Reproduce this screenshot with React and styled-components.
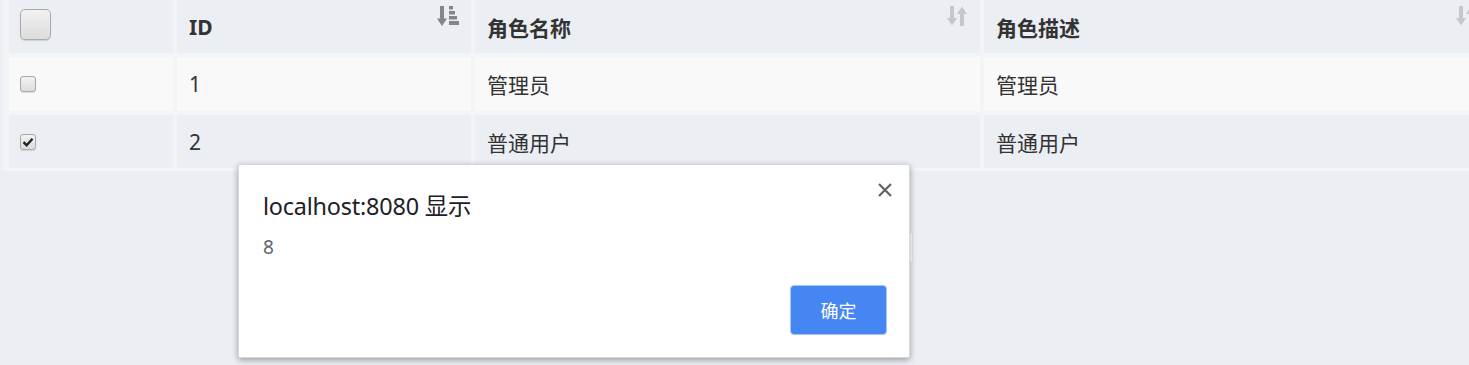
import React from "react";
import styled, { createGlobalStyle } from "styled-components";

const Global = createGlobalStyle`
  html, body { margin: 0; padding: 0; }
  body {
    background: #ebeef3;
    overflow: hidden;
    width: 1469px;
    height: 365px;
    font-family: "Noto Sans", "Noto Sans CJK SC", sans-serif;
    color: #333;
  }
`;

const Page = styled.div`
  position: relative;
  width: 1469px;
  height: 365px;
  overflow: hidden;
`;

const Table = styled.div`
  display: grid;
  grid-template-columns: 164px 294px 505px 505px;
  grid-template-rows: 53px 54px 53px;
  gap: 4px;
  padding: 0 6px 3px 6px;
  margin-left: 3px;
  width: max-content;
  background: #f3f4f7;
`;

const Cell = styled.div`
  position: relative;
  display: flex;
  align-items: center;
  padding: 0 12px;
  background: ${(p) => (p.$striped ? "#f9f9f9" : "#ebeef3")};
  font-size: 21px;
  font-weight: ${(p) => (p.$head ? 700 : 400)};
  color: #333;
  white-space: nowrap;
`;

const CheckCell = styled(Cell)`
  padding: 0 11px;
`;

const SortIcon = styled.span`
  position: absolute;
  top: 5px;
  right: 10px;
  width: 24px;
  height: 22px;
  display: block;
`;

const Box = styled.span`
  display: inline-flex;
  align-items: center;
  justify-content: center;
  box-sizing: border-box;
  width: ${(p) => p.$size}px;
  height: ${(p) => p.$size}px;
  border: 1px solid #a9a9a9;
  border-radius: ${(p) => (p.$size > 20 ? 5 : 3)}px;
  background: linear-gradient(#f2f2f2, #dcdcdc);
  box-shadow: 0 1px 1px rgba(0, 0, 0, 0.12);
  margin-top: ${(p) => (p.$size > 20 ? -5 : 0)}px;
`;

const Dialog = styled.div`
  position: absolute;
  left: 238px;
  top: 164px;
  width: 672px;
  height: 194px;
  box-sizing: border-box;
  background: #fff;
  border: 1px solid #d6d8dc;
  border-radius: 2px;
  box-shadow: 0 2px 6px rgba(0, 0, 0, 0.35);
  padding: 24px 24px 0 24px;
  display: flex;
  flex-direction: column;
`;

const Behind = styled.div`
  position: absolute;
  left: 700px;
  top: 233px;
  width: 212px;
  height: 29px;
  background: #fff;
  border-right: 1px solid #e3e5e8;
`;

const Title = styled.div`
  font-size: 23.4px;
  color: #202124;
  line-height: 34px;
  letter-spacing: -0.2px;
`;

const Message = styled.div`
  margin-top: 11px;
  font-size: 19px;
  color: #5f6368;
  line-height: 26px;
`;

const Footer = styled.div`
  margin-top: auto;
  margin-bottom: 22px;
  display: flex;
  justify-content: flex-end;
  margin-right: -2px;
`;

const OkButton = styled.button`
  width: 97px;
  height: 50px;
  border: 1px solid #a6c6fb;
  border-radius: 4px;
  background: #4686f3;
  color: #fff;
  font-family: "Noto Sans CJK SC", sans-serif;
  font-size: 18px;
  padding: 0;
`;

const Close = styled.span`
  position: absolute;
  right: 16px;
  top: 16px;
  width: 16px;
  height: 16px;
  display: block;
`;

const CheckMark = () => (
  <svg width="12" height="12" viewBox="0 0 12 12">
    <path d="M1.5 6.2 L4.6 9.2 L10.5 2.8" fill="none" stroke="#222" strokeWidth="2.4" />
  </svg>
);

const SortDesc = () => (
  <svg width="24" height="22" viewBox="0 0 24 22">
    <g fill="#858585">
      <rect x="3" y="1" width="4" height="15" />
      <path d="M0 13.5 L10 13.5 L5 21 Z" />
      <rect x="12" y="1" width="4" height="3.5" />
      <rect x="12" y="6" width="6" height="3.5" />
      <rect x="12" y="11" width="8" height="3.5" />
      <rect x="12" y="16" width="10" height="4" />
    </g>
  </svg>
);

const SortBoth = () => (
  <svg width="24" height="22" viewBox="0 0 24 22">
    <g fill="#c4c8cd">
      <rect x="4" y="1" width="4" height="14" />
      <path d="M1 13 L11 13 L6 20.5 Z" />
      <rect x="14" y="7" width="4" height="14" />
      <path d="M11 9 L21 9 L16 1.5 Z" />
    </g>
  </svg>
);

const XIcon = () => (
  <svg width="16" height="16" viewBox="0 0 16 16">
    <path d="M2 2 L14 14 M14 2 L2 14" stroke="#5f6368" strokeWidth="2.2" />
  </svg>
);

const rows = [
  { id: 1, name: "管理员", desc: "管理员", checked: false },
  { id: 2, name: "普通用户", desc: "普通用户", checked: true },
];

export default function App() {
  return (
    <Page>
      <Global />
      <Table>
        <CheckCell $head>
          <Box $size={31} />
        </CheckCell>
        <Cell $head>
          ID
          <SortIcon>
            <SortDesc />
          </SortIcon>
        </Cell>
        <Cell $head>
          角色名称
          <SortIcon>
            <SortBoth />
          </SortIcon>
        </Cell>
        <Cell $head>
          角色描述
          <SortIcon>
            <SortBoth />
          </SortIcon>
        </Cell>
        {rows.map((r, i) => (
          <React.Fragment key={r.id}>
            <CheckCell $striped={i % 2 === 0}>
              <Box $size={16}>{r.checked && <CheckMark />}</Box>
            </CheckCell>
            <Cell $striped={i % 2 === 0}>{r.id}</Cell>
            <Cell $striped={i % 2 === 0}>{r.name}</Cell>
            <Cell $striped={i % 2 === 0}>{r.desc}</Cell>
          </React.Fragment>
        ))}
      </Table>
      <Behind />
      <Dialog>
        <Close>
          <XIcon />
        </Close>
        <Title>localhost:8080 显示</Title>
        <Message>8</Message>
        <Footer>
          <OkButton>确定</OkButton>
        </Footer>
      </Dialog>
    </Page>
  );
}
